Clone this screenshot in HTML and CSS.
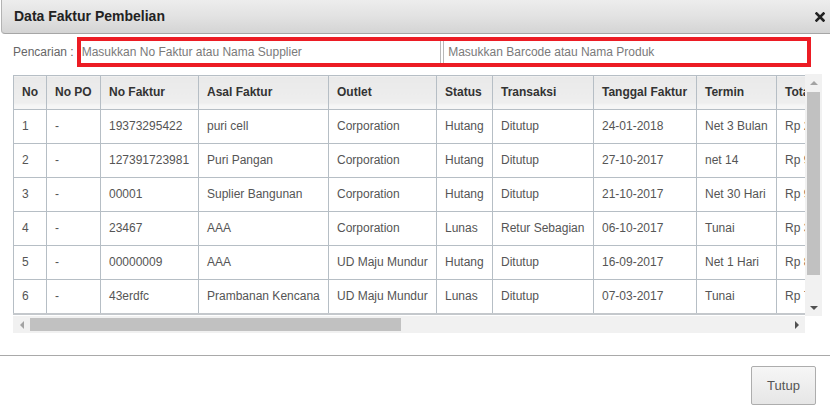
FILE: index.html
```html
<!DOCTYPE html>
<html lang="id">
<head>
<meta charset="utf-8">
<title>Data Faktur Pembelian</title>
<link rel="stylesheet" href="styles.css">
</head>
<body>
<div class="dialog">
  <div class="titlebar">
    <span class="title">Data Faktur Pembelian</span>
    <span class="close" aria-label="Tutup">
      <svg width="10" height="10" viewBox="0 0 10 10"><path d="M1.5 1.5 L8.5 8.5 M8.5 1.5 L1.5 8.5" stroke="#222" stroke-width="2.6" stroke-linecap="square"/></svg>
    </span>
  </div>
  <div class="content">
    <div class="search">
      <span class="search-label">Pencarian :</span>
      <div class="search-box">
        <input class="search-input first" type="text" placeholder="Masukkan No Faktur atau Nama Supplier">
        <input class="search-input second" type="text" placeholder="Masukkan Barcode atau Nama Produk">
      </div>
    </div>
    <div class="table-frame">
      <div class="table-view">
        <table class="grid">
          <colgroup>
            <col class="c-no"><col class="c-po"><col class="c-faktur"><col class="c-asal"><col class="c-outlet"><col class="c-status"><col class="c-trans"><col class="c-tgl"><col class="c-termin"><col class="c-total"><col class="c-diskon"><col class="c-ppn"><col class="c-grand"><col class="c-bayar"><col class="c-sisa"><col class="c-jt"><col class="c-ket">
          </colgroup>
          <thead>
            <tr><th>No</th><th>No PO</th><th>No Faktur</th><th>Asal Faktur</th><th>Outlet</th><th>Status</th><th>Transaksi</th><th>Tanggal Faktur</th><th>Termin</th><th>Total</th><th>Diskon</th><th>PPN</th><th>Grand Total</th><th>Dibayar</th><th>Sisa</th><th>Jatuh Tempo</th><th>Keterangan</th></tr>
          </thead>
          <tbody>
            <tr><td>1</td><td>-</td><td>19373295422</td><td>puri cell</td><td>Corporation</td><td>Hutang</td><td>Ditutup</td><td>24-01-2018</td><td>Net 3 Bulan</td><td>Rp 2.150.000</td><td>Rp 0</td><td>Rp 0</td><td>Rp 2.150.000</td><td>Rp 0</td><td>Rp 2.150.000</td><td>24-04-2018</td><td>-</td></tr>
            <tr><td>2</td><td>-</td><td>127391723981</td><td>Puri Pangan</td><td>Corporation</td><td>Hutang</td><td>Ditutup</td><td>27-10-2017</td><td>net 14</td><td>Rp 950.000</td><td>Rp 0</td><td>Rp 0</td><td>Rp 950.000</td><td>Rp 0</td><td>Rp 950.000</td><td>10-11-2017</td><td>-</td></tr>
            <tr><td>3</td><td>-</td><td>00001</td><td>Suplier Bangunan</td><td>Corporation</td><td>Hutang</td><td>Ditutup</td><td>21-10-2017</td><td>Net 30 Hari</td><td>Rp 975.000</td><td>Rp 0</td><td>Rp 0</td><td>Rp 975.000</td><td>Rp 0</td><td>Rp 975.000</td><td>20-11-2017</td><td>-</td></tr>
            <tr><td>4</td><td>-</td><td>23467</td><td>AAA</td><td>Corporation</td><td>Lunas</td><td>Retur Sebagian</td><td>06-10-2017</td><td>Tunai</td><td>Rp 350.000</td><td>Rp 0</td><td>Rp 0</td><td>Rp 350.000</td><td>Rp 350.000</td><td>Rp 0</td><td>06-10-2017</td><td>-</td></tr>
            <tr><td>5</td><td>-</td><td>00000009</td><td>AAA</td><td>UD Maju Mundur</td><td>Hutang</td><td>Ditutup</td><td>16-09-2017</td><td>Net 1 Hari</td><td>Rp 850.000</td><td>Rp 0</td><td>Rp 0</td><td>Rp 850.000</td><td>Rp 0</td><td>Rp 850.000</td><td>17-09-2017</td><td>-</td></tr>
            <tr><td>6</td><td>-</td><td>43erdfc</td><td>Prambanan Kencana</td><td>UD Maju Mundur</td><td>Lunas</td><td>Ditutup</td><td>07-03-2017</td><td>Tunai</td><td>Rp 750.000</td><td>Rp 0</td><td>Rp 0</td><td>Rp 750.000</td><td>Rp 750.000</td><td>Rp 0</td><td>07-03-2017</td><td>-</td></tr>
          </tbody>
        </table>
      </div>
      <div class="vbar">
        <span class="sb-btn"><span class="arrow up"></span></span>
        <span class="vtrack"><span class="vthumb"></span></span>
        <span class="sb-btn"><span class="arrow down"></span></span>
      </div>
      <div class="hbar">
        <span class="sb-btn"><span class="arrow left"></span></span>
        <span class="htrack"><span class="hthumb"></span></span>
        <span class="sb-btn"><span class="arrow right"></span></span>
      </div>
      <div class="corner"></div>
    </div>
  </div>
  <div class="footer">
    <button class="btn" type="button">Tutup</button>
  </div>
</div>
</body>
</html>
```

FILE: styles.css
```css
* { box-sizing: border-box; }

html, body {
  margin: 0;
  padding: 0;
  background: #fff;
}

body {
  font-family: "Liberation Sans", Arial, sans-serif;
  font-size: 12px;
  color: #555;
  width: 830px;
  height: 415px;
  overflow: hidden;
}

.dialog {
  display: flex;
  flex-direction: column;
}

.titlebar {
  display: flex;
  align-items: center;
  justify-content: space-between;
  height: 34px;
  margin-left: 1px;
  padding-left: 12px;
  padding-right: 4px;
  border-left: 1px solid #b3b3b3;
  border-bottom: 1px solid #a6a6a6;
  border-bottom-left-radius: 4px;
  background: linear-gradient(to bottom, #ededed 0%, #e2e2e2 50%, #d4d4d4 100%);
}

.title {
  font-size: 14px;
  font-weight: bold;
  color: #222;
  padding-bottom: 1px;
}

.close {
  display: flex;
  width: 10px;
  height: 10px;
  margin-right: 1px;
}

.content {
  padding-left: 13px;
  padding-top: 3px;
}

.search {
  display: flex;
  align-items: center;
  gap: 3px;
}

.search-label {
  color: #666;
  white-space: nowrap;
}

.search-box {
  display: flex;
  width: 734px;
  height: 30px;
  border: 4px solid #ec1c24;
  gap: 2px;
  background: #fff;
}

.search-input {
  flex: 1;
  min-width: 0;
  height: 22px;
  border: 0;
  margin: 0;
  font-family: "Liberation Sans", Arial, sans-serif;
  font-size: 12px;
  color: #555;
  background: #fff;
  outline: none;
}

.search-input.first {
  padding-left: 1px;
  border-right: 1px solid #b8b8b8;
}

.search-input.second {
  padding-left: 4px;
  border-left: 1px solid #b8b8b8;
}

.search-input::placeholder {
  color: #7a7a7a;
  opacity: 1;
}

/* table with its scrollbars */
.table-frame {
  margin-top: 7px;
  display: grid;
  grid-template-columns: 792px 17px;
  grid-template-rows: 242px 17px;
}

.table-view {
  overflow: hidden;
}

.vbar {
  display: flex;
  flex-direction: column;
  background: #f1f1f1;
}

.hbar {
  display: flex;
  background: #f1f1f1;
}

.corner {
  background: #fff;
}

.sb-btn {
  flex: none;
  width: 17px;
  height: 17px;
  display: flex;
  align-items: center;
  justify-content: center;
}

.vtrack {
  flex: 1;
  display: flex;
  flex-direction: column;
  padding: 0 2px;
}

.vthumb {
  height: 183px;
  margin-top: 1px;
  background: #c1c1c1;
}

.htrack {
  flex: 1;
  display: flex;
  padding: 2px 0;
}

.hthumb {
  width: 371px;
  background: #c1c1c1;
}

.arrow {
  width: 0;
  height: 0;
  border: 0 solid transparent;
}

.arrow.up {
  border-left-width: 4px;
  border-right-width: 4px;
  border-bottom: 4px solid #a3a3a3;
}

.arrow.down {
  border-left-width: 4px;
  border-right-width: 4px;
  border-top: 4px solid #505050;
}

.arrow.left {
  border-top-width: 4px;
  border-bottom-width: 4px;
  border-right: 4px solid #a3a3a3;
}

.arrow.right {
  border-top-width: 4px;
  border-bottom-width: 4px;
  border-left: 4px solid #505050;
}

.grid {
  table-layout: fixed;
  border-collapse: collapse;
  width: 1618px;
  margin-top: 1px;
}

.c-no { width: 33px; }
.c-po { width: 54px; }
.c-faktur { width: 98px; }
.c-asal { width: 130px; }
.c-outlet { width: 108px; }
.c-status { width: 56px; }
.c-trans { width: 101px; }
.c-tgl { width: 103px; }
.c-termin { width: 80px; }
.c-total { width: 110px; }
.c-diskon { width: 95px; }
.c-ppn { width: 95px; }
.c-grand { width: 115px; }
.c-bayar { width: 110px; }
.c-sisa { width: 105px; }
.c-jt { width: 115px; }
.c-ket { width: 110px; }

.grid th,
.grid td {
  border: 1px solid #b6bec5;
  padding: 8px 8px;
  height: 34px;
  line-height: 17px;
  text-align: left;
  white-space: nowrap;
  overflow: hidden;
}

.grid th {
  font-weight: bold;
  color: #333;
  background: linear-gradient(to bottom, #e9e9e9 0%, #eeeeee 80%, #f6f6f6 88%, #f6f6f6 100%);
}

.grid tbody tr:last-child td {
  border-bottom: 2px solid #c4c8cc;
}

.grid td {
  color: #555;
  background: #fff;
}

.footer {
  margin-top: 22px;
  border-top: 1px solid #a9a9a9;
  display: flex;
  justify-content: flex-end;
  padding-top: 10px;
  padding-right: 14px;
}

.btn {
  width: 65px;
  height: 39px;
  border: 1px solid #adadad;
  border-radius: 2px;
  background: linear-gradient(to bottom, #f6f6f6 0%, #e6e6e6 100%);
  font-family: "Liberation Sans", Arial, sans-serif;
  font-size: 13px;
  color: #555;
  padding: 0;
}
```
